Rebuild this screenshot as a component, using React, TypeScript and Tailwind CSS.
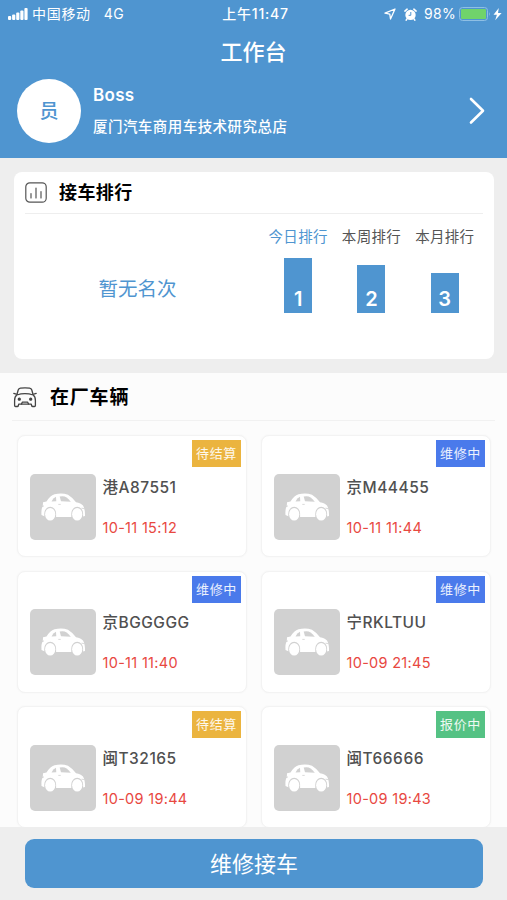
type Vehicle = { plate: string; time: string; status: '待结算' | '维修中' | '报价中' };

const vehicles: Vehicle[] = [
  { plate: '港A87551', time: '10-11 15:12', status: '待结算' },
  { plate: '京M44455', time: '10-11 11:44', status: '维修中' },
  { plate: '京BGGGGG', time: '10-11 11:40', status: '维修中' },
  { plate: '宁RKLTUU', time: '10-09 21:45', status: '维修中' },
  { plate: '闽T32165', time: '10-09 19:44', status: '待结算' },
  { plate: '闽T66666', time: '10-09 19:43', status: '报价中' },
];

const statusColor = {
  待结算: 'bg-[#ebb43f]',
  维修中: 'bg-[#4a7aeb]',
  报价中: 'bg-[#55c284]',
};

const ranks = [
  { label: '今日排行', rank: 1, text: 'text-[#4f95d0]', bar: 'h-[55px]' },
  { label: '本周排行', rank: 2, text: 'text-[#555]', bar: 'h-12' },
  { label: '本月排行', rank: 3, text: 'text-[#555]', bar: 'h-[40px]' },
];

function StatusBar() {
  return (
    <div className="flex h-7 items-center pl-2 pr-1 text-[14px] leading-7">
      <div className="flex flex-1 items-center">
        <svg className="mr-1 h-3 w-5 shrink-0" viewBox="0 0 20 12" fill="#fff">
          <rect x="0" y="8" width="3.2" height="4" rx="1" />
          <rect x="4.1" y="6.5" width="3.2" height="5.5" rx="1" />
          <rect x="8.2" y="4.5" width="3.2" height="7.5" rx="1" />
          <rect x="12.3" y="2.5" width="3.2" height="9.5" rx="1" />
          <rect x="16.4" y="0" width="3.2" height="12" rx="1" />
        </svg>
        <span className="tracking-[0.7px]">中国移动</span>
        <span className="ml-[13px] tracking-[0.3px]">4G</span>
      </div>
      <div className="font-medium tracking-[0.8px]">上午11:47</div>
      <div className="flex flex-1 items-center justify-end">
        <svg className="mr-2 h-3 w-3" viewBox="0 0 12 12" fill="none" stroke="#fff" strokeWidth="1.3" strokeLinejoin="round">
          <path d="M11 1 1 5.2l4.8 1 .7 4.8Z" />
        </svg>
        <svg className="mr-[7px] h-[13px] w-[13px]" viewBox="0 0 13 13">
          <circle cx="6.5" cy="6.9" r="5.2" fill="#fff" />
          <path d="M.9 3.1 3.1 1.2M12.1 3.1 9.9 1.2M3 10.9l-.8 1.2M10 10.9l.8 1.2" stroke="#fff" strokeWidth="1.6" strokeLinecap="round" />
          <path d="M6.8 4v3.3H4.6" fill="none" stroke="#4f95d0" strokeWidth="1" />
        </svg>
        <span className="mr-[3px] tracking-[0.3px]">98%</span>
        <svg className="h-[14px] w-[44px]" viewBox="0 0 44 14">
          <rect x=".5" y=".5" width="28" height="13" rx="3" fill="none" stroke="#8fbfe4" />
          <rect x="2" y="2" width="25" height="10" rx="1" fill="#70d36b" />
          <path d="M30 5q1.8 2 0 4" fill="#8fbfe4" />
          <path d="M39.8 1 34.5 7.8h3.4l-1.7 5.4 6.4-7.2H39Z" fill="#fff" />
        </svg>
      </div>
    </div>
  );
}

function CarPlaceholder() {
  return (
    <svg className="h-[66px] w-[66px] shrink-0 rounded-[5px] bg-[#d1d1d1]" viewBox="0 0 66 66">
      <path
        d="M13 28.3 16.5 27.5Q20 21.8 24.5 20.3Q32 18.6 38 20.8Q42 23.2 46 28.2Q51 29 53 31.5Q55.3 35.5 55 42L51 43H16L11.5 41Q11 35 12.8 32Z"
        fill="#fff"
      />
      <path d="M21.5 27.4Q23 24 26 22.8L26.3 27.2Z" fill="#d1d1d1" />
      <path d="M29.7 22.6Q34 21.8 36.6 23.4Q39 25 40.8 27.8L31 27.2Z" fill="#d1d1d1" />
      <path d="M28.3 30.4h2.4M12 32.8l2-1M51.5 34.2l3 .4" stroke="#d1d1d1" strokeWidth=".8" />
      <path d="M14.3 44V39.5a5.9 6.8 0 0 1 11.8 0V44ZM41.3 44V39.5a5.9 6.8 0 0 1 11.8 0V44Z" fill="#d1d1d1" />
      <ellipse cx="20.2" cy="40.3" rx="5.1" ry="6.3" fill="#fff" />
      <ellipse cx="47.2" cy="40.3" rx="5.1" ry="6.3" fill="#fff" />
    </svg>
  );
}

function VehicleCard({ plate, time, status }: Vehicle) {
  return (
    <div className="h-[122px] rounded-lg border border-[#f3f3f3] bg-white pl-[11.5px] pr-[5px] pt-[4.4px] shadow-[0_0_2px_#f4f4f4]">
      <div className="flex justify-end">
        <span className={`flex h-[27px] w-[49px] items-center justify-center whitespace-nowrap text-[13px] tracking-[0.6px] text-white/90 ${statusColor[status]}`}>
          {status}
        </span>
      </div>
      <div className="mt-[6.5px] flex">
        <CarPlaceholder />
        <div className="ml-[7px] whitespace-nowrap">
          <div className="h-[27px] text-[15.5px] font-medium leading-[27px] tracking-[0.5px] text-[#505050]">{plate}</div>
          <div className="mt-[13px] h-[27px] text-[14.5px] leading-[27px] tracking-[0.3px] text-[#e8483f]">{time}</div>
        </div>
      </div>
    </div>
  );
}

export default function App() {
  return (
    <div className="flex h-[900px] w-[507px] flex-col overflow-hidden bg-[#eee] font-['Inter','Noto_Sans_CJK_SC',sans-serif]">
      <header className="h-[158px] shrink-0 bg-[#4f95d0] text-white">
        <StatusBar />
        <h1 className="h-12 text-center text-[22px] font-medium leading-[48px]">工作台</h1>
        <div className="flex items-center pl-[17px] pr-[22px] pt-[3px]">
          <div className="flex h-16 w-16 items-center justify-center rounded-full bg-white pt-0.5 text-[19px] font-medium text-[#4f95d0]">员</div>
          <div className="ml-3 flex-1">
            <div className="text-[17px] font-semibold leading-8 tracking-[0.3px]">Boss</div>
            <div className="text-[14.5px] font-medium leading-8 tracking-[0.45px]">厦门汽车商用车技术研究总店</div>
          </div>
          <svg className="h-7 w-4" viewBox="0 0 16 28" fill="none" stroke="#fff" strokeWidth="2.6" strokeLinecap="round" strokeLinejoin="round">
            <path d="m2 2 12 11.8L2 25.5" />
          </svg>
        </div>
      </header>

      <section className="mb-[14px] ml-[14px] mr-[13px] mt-[14px] h-[187px] shrink-0 rounded-lg bg-white px-[11px]">
        <div className="flex h-[42px] items-center border-b border-[#eee]">
          <svg className="h-[22px] w-[22px]" viewBox="0 0 22 22" fill="none" stroke="#555" strokeWidth="1.2" strokeLinecap="round">
            <rect x=".8" y=".8" width="20.4" height="19.4" rx="4" />
            <path d="M6 11.5v4.5M11 6v10M16 9.5V16" />
          </svg>
          <h2 className="ml-3 text-[18px] font-bold tracking-[0.4px]">接车排行</h2>
        </div>
        <div className="flex">
          <div className="w-[225px] pt-[57px] text-center text-[19.5px] leading-9 text-[#4f95d0]">暂无名次</div>
          <div className="ml-[11.5px] flex pt-[9px]">
            {ranks.map((r) => (
              <div key={r.rank} className="flex h-[90px] w-[73.3px] flex-col items-center justify-between">
                <div className={`whitespace-nowrap text-[14.5px] leading-7 tracking-[0.3px] ${r.text}`}>{r.label}</div>
                <div className={`flex w-7 items-end justify-center bg-[#4f95d0] text-[20px] font-semibold leading-[27px] text-white ${r.bar}`}>
                  {r.rank}
                </div>
              </div>
            ))}
          </div>
        </div>
      </section>

      <section className="h-[454px] shrink-0 overflow-hidden bg-[#fcfcfc] px-3">
        <div className="flex h-12 items-center border-b border-[#f1f1f1] pt-[2px]">
          <svg className="ml-px h-[22px] w-6" viewBox="0 0 24 22" fill="none" stroke="#444" strokeWidth="1.3" strokeLinejoin="round" strokeLinecap="round">
            <path d="M3.8 8 5.2 3Q5.7 1.4 7.4 1.2q4.6-.6 9.2 0 1.7.2 2.2 1.8l1.4 5M3.8 8Q12 5.4 20.2 8 22.4 9.5 22.4 13.5v5q0 1-1 1h-1.6q-1 0-1.2-1l-.3-1.3H5.7l-.3 1.3q-.2 1-1.2 1H2.6q-1 0-1-1v-5Q1.6 9.5 3.8 8Z" />
            <path d="M3.2 7.2.8 6.4M20.8 7.2l2.4-.8M8.5 17l.8-1.8h5.4l.8 1.8" />
            <circle cx="6.3" cy="12.2" r="1" fill="#444" />
            <circle cx="17.7" cy="12.2" r="1" fill="#444" />
          </svg>
          <h2 className="ml-[13px] text-[19px] font-bold leading-6 tracking-[0.8px]">在厂车辆</h2>
        </div>
        <div className="grid grid-cols-2 gap-x-[14px] gap-y-[13.5px] pl-[5px] pr-1 pt-[14px]">
          {vehicles.map((v) => (
            <VehicleCard key={v.plate} {...v} />
          ))}
        </div>
      </section>

      <footer className="flex-1 pl-[25px] pr-6 pt-[12px]">
        <button className="h-[49px] w-full rounded-[9px] bg-[#4f95d0] pt-px text-[22px] text-white">维修接车</button>
      </footer>
    </div>
  );
}
